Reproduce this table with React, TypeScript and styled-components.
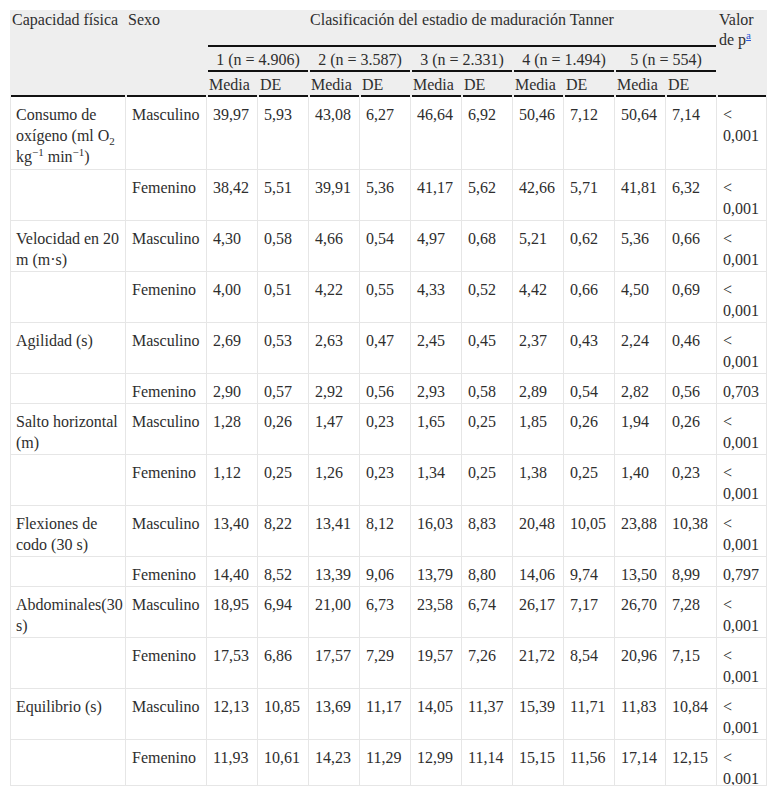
import React from "react";
import styled, { createGlobalStyle } from "styled-components";

const SERIF = `"Liberation Serif", "Times New Roman", serif`;

const GlobalStyle = createGlobalStyle`
  html, body { margin: 0; padding: 0; background: #ffffff; font-family: ${SERIF}; }
`;

const Page = styled.div`
  padding: 10px 0 0 10px;
`;

const Clip = styled.div`
  width: 757px;
  height: 775px;
  overflow: hidden;
  border-bottom: 1px solid #e6e6e6;
`;

const Table = styled.table`
  border-collapse: separate;
  border-spacing: 0;
  table-layout: fixed;
  width: 757px;
  font-family: ${SERIF};
  font-size: 16px;
  color: #2e2e2e;
`;

const HeadRow = styled.tr<{ $h: number }>`
  height: ${(p) => p.$h}px;
`;

const HeadCell = styled.th<{ $align?: "left" | "center"; $mid?: boolean }>`
  position: relative;
  background: #eeeeee;
  font-family: ${SERIF};
  font-weight: normal;
  font-size: 16px;
  color: #2e2e2e;
  text-align: ${(p) => p.$align ?? "left"};
  vertical-align: ${(p) => (p.$mid ? "middle" : "top")};
  padding: 0 2px;
  line-height: 20px;
  &::after {
    content: "";
    position: absolute;
    left: 1px;
    right: 1px;
    bottom: 0;
    height: 2px;
    background: #111111;
  }
`;

const Foot = styled.a`
  color: #2a55d6;
  text-decoration: underline;
  font-size: 11px;
  vertical-align: super;
  line-height: 0;
`;

const BodyCell = styled.td<{ $first?: boolean; $extra?: number }>`
  font-family: ${SERIF};
  font-size: 16px;
  color: #2e2e2e;
  vertical-align: top;
  padding: 7px 2px ${(p) => 1 + (p.$extra ?? 0)}px ${(p) => (p.$first ? 5 : 6)}px;
  line-height: 21px;
  border-right: 1px solid #e6e6e6;
  border-bottom: 1px solid #e6e6e6;
  border-left: ${(p) => (p.$first ? "1px solid #e6e6e6" : "none")};
`;

const Sub = styled.sub`
  font-size: 11px;
  line-height: 0;
`;
const Sup = styled.sup`
  font-size: 11px;
  line-height: 0;
`;

type Row = { label?: React.ReactNode; sex: string; vals: string[]; p: string; extra?: number };

const rows: Row[] = [
  {
    label: (
      <>
        Consumo de oxígeno (ml O<Sub>2</Sub> kg<Sup>−1</Sup> min<Sup>−1</Sup>)
      </>
    ),
    sex: "Masculino",
    vals: ["39,97", "5,93", "43,08", "6,27", "46,64", "6,92", "50,46", "7,12", "50,64", "7,14"],
    p: "< 0,001",
    extra: 1,
  },
  { sex: "Femenino", vals: ["38,42", "5,51", "39,91", "5,36", "41,17", "5,62", "42,66", "5,71", "41,81", "6,32"], p: "< 0,001" },
  { label: "Velocidad en 20 m (m·s)", sex: "Masculino", vals: ["4,30", "0,58", "4,66", "0,54", "4,97", "0,68", "5,21", "0,62", "5,36", "0,66"], p: "< 0,001" },
  { sex: "Femenino", vals: ["4,00", "0,51", "4,22", "0,55", "4,33", "0,52", "4,42", "0,66", "4,50", "0,69"], p: "< 0,001" },
  { label: "Agilidad (s)", sex: "Masculino", vals: ["2,69", "0,53", "2,63", "0,47", "2,45", "0,45", "2,37", "0,43", "2,24", "0,46"], p: "< 0,001" },
  { sex: "Femenino", vals: ["2,90", "0,57", "2,92", "0,56", "2,93", "0,58", "2,89", "0,54", "2,82", "0,56"], p: "0,703" },
  { label: "Salto horizontal (m)", sex: "Masculino", vals: ["1,28", "0,26", "1,47", "0,23", "1,65", "0,25", "1,85", "0,26", "1,94", "0,26"], p: "< 0,001" },
  { sex: "Femenino", vals: ["1,12", "0,25", "1,26", "0,23", "1,34", "0,25", "1,38", "0,25", "1,40", "0,23"], p: "< 0,001" },
  { label: "Flexiones de codo (30 s)", sex: "Masculino", vals: ["13,40", "8,22", "13,41", "8,12", "16,03", "8,83", "20,48", "10,05", "23,88", "10,38"], p: "< 0,001" },
  { sex: "Femenino", vals: ["14,40", "8,52", "13,39", "9,06", "13,79", "8,80", "14,06", "9,74", "13,50", "8,99"], p: "0,797" },
  { label: "Abdominales(30 s)", sex: "Masculino", vals: ["18,95", "6,94", "21,00", "6,73", "23,58", "6,74", "26,17", "7,17", "26,70", "7,28"], p: "< 0,001" },
  { sex: "Femenino", vals: ["17,53", "6,86", "17,57", "7,29", "19,57", "7,26", "21,72", "8,54", "20,96", "7,15"], p: "< 0,001" },
  { label: "Equilibrio (s)", sex: "Masculino", vals: ["12,13", "10,85", "13,69", "11,17", "14,05", "11,37", "15,39", "11,71", "11,83", "10,84"], p: "< 0,001" },
  { sex: "Femenino", vals: ["11,93", "10,61", "14,23", "11,29", "12,99", "11,14", "15,15", "11,56", "17,14", "12,15"], p: "< 0,001" },
];

const groups = ["1 (n = 4.906)", "2 (n = 3.587)", "3 (n = 2.331)", "4 (n = 1.494)", "5 (n = 554)"];

export default function App() {
  return (
    <Page>
      <GlobalStyle />
      <Clip>
        <Table>
          <colgroup>
            <col style={{ width: 116 }} />
            <col style={{ width: 81 }} />
            {Array.from({ length: 10 }).map((_, i) => (
              <col key={i} style={{ width: 51 }} />
            ))}
            <col style={{ width: 50 }} />
          </colgroup>
          <thead>
            <HeadRow $h={37}>
              <HeadCell rowSpan={3}>Capacidad física</HeadCell>
              <HeadCell rowSpan={3}>Sexo</HeadCell>
              <HeadCell colSpan={10} $align="center">
                Clasificación del estadio de maduración Tanner
              </HeadCell>
              <HeadCell rowSpan={3}>
                Valor de p<Foot href="#">a</Foot>
              </HeadCell>
            </HeadRow>
            <HeadRow $h={25}>
              {groups.map((g) => (
                <HeadCell key={g} colSpan={2} $align="center" $mid>
                  {g}
                </HeadCell>
              ))}
            </HeadRow>
            <HeadRow $h={25}>
              {groups.map((g) => (
                <React.Fragment key={g}>
                  <HeadCell $mid>Media</HeadCell>
                  <HeadCell $mid>DE</HeadCell>
                </React.Fragment>
              ))}
            </HeadRow>
          </thead>
          <tbody>
            {rows.map((r, i) => (
              <tr key={i}>
                <BodyCell $first $extra={r.extra}>
                  {r.label ?? ""}
                </BodyCell>
                <BodyCell>{r.sex}</BodyCell>
                {r.vals.map((v, j) => (
                  <BodyCell key={j}>{v}</BodyCell>
                ))}
                <BodyCell>{r.p}</BodyCell>
              </tr>
            ))}
          </tbody>
        </Table>
      </Clip>
    </Page>
  );
}
